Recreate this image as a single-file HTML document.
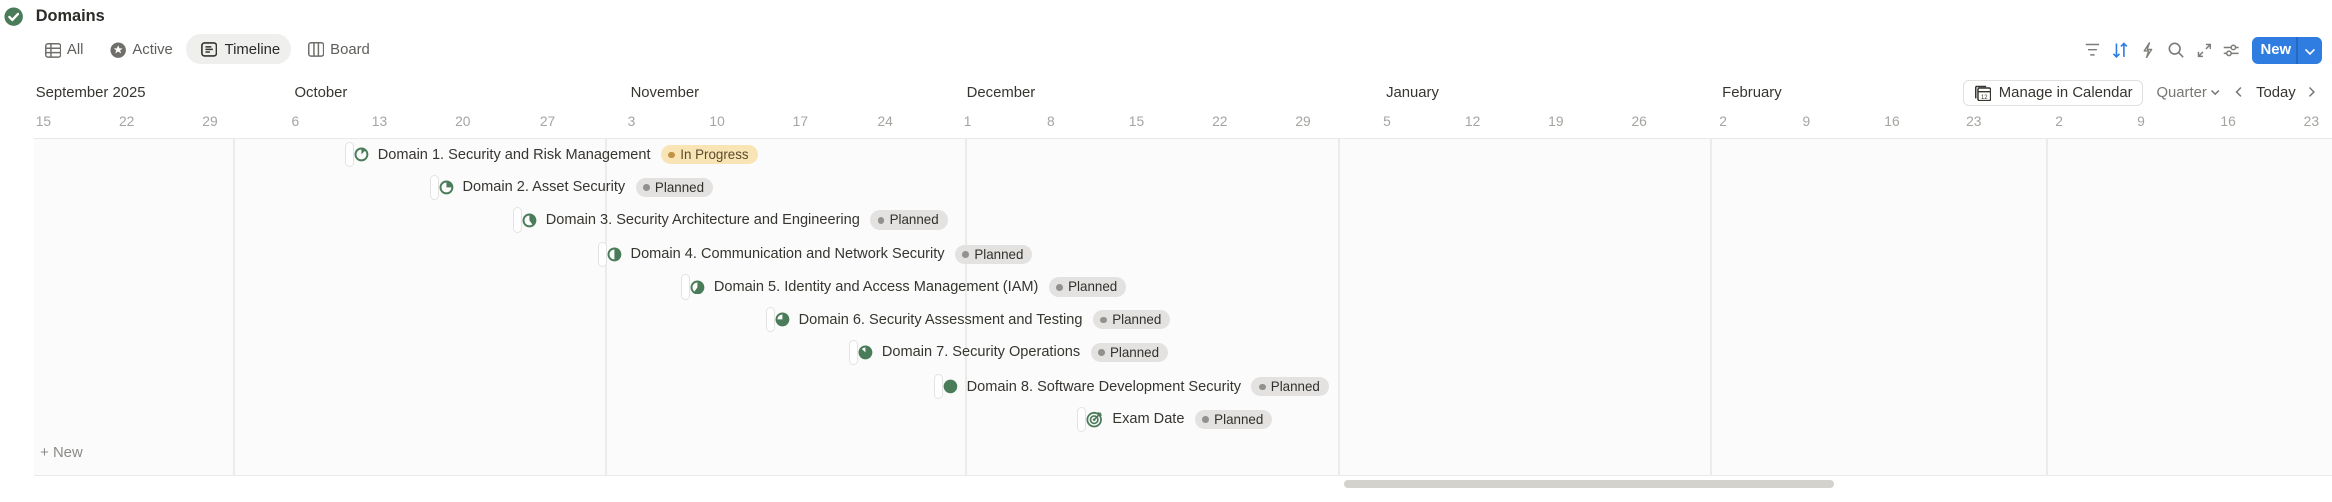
<!DOCTYPE html>
<html><head><meta charset="utf-8"><style>
html,body{margin:0;padding:0;background:#fff;overflow:hidden}
body{width:2332px;height:502px}
#w{zoom:1.4872;width:1568px;height:338px;position:relative;font-family:"Liberation Sans",sans-serif;color:#37352f}
.a{position:absolute;white-space:nowrap}
.tab{font-size:10px;color:#5f5e5b;top:28px}
.mo{font-size:10px;top:57px;color:#37352f}
.d{font-size:9.3px;color:#a5a4a0;top:76px}
.vl{position:absolute;top:93px;height:227px;width:1px;background:#ebebea}
.row{position:absolute;height:18px;display:flex;align-items:center;white-space:nowrap}
.hd{width:6px;height:17px;border:1px solid #e3e3e1;border-radius:4px;background:#fff;box-sizing:border-box;flex:none}
.row svg{margin-left:0;flex:none}
.t{font-size:9.8px;color:#37352f;margin-left:6px}
.b{font-size:9px;border-radius:7px;height:13px;line-height:13px;padding:0 6px 0 13px;position:relative;margin-left:7px}
.b:before{content:"";position:absolute;left:5px;top:4.5px;width:4.5px;height:4.5px;border-radius:50%;background:#91918e}
.p{background:#e3e2e0;color:#32302c}
.ip{background:#f9e4b5;color:#5b4a2a}
.ip:before{background:#c29343}
.ic{position:absolute}
</style></head><body><div id="w">
<svg class="a" style="left:3px;top:5px" width="13" height="13" viewBox="0 0 13 13"><circle cx="6.5" cy="6.5" r="6.2" fill="#4a7c59"/><path d="M3.6 6.7l2 2 3.8-4" stroke="#fff" stroke-width="1.6" fill="none" stroke-linecap="round" stroke-linejoin="round"/></svg>
<div class="a" style="left:24px;top:5px;font-size:11px;font-weight:bold;color:#2c2b28">Domains</div>

<svg class="ic" style="left:30px;top:29px" width="11" height="10" viewBox="0 0 11 10"><rect x=".5" y=".5" width="10" height="9" rx="1.5" fill="none" stroke="#6f6e69"/><path d="M.5 3.5h10M.5 6.5h10M4 .5v9" stroke="#6f6e69" fill="none"/></svg>
<div class="a tab" style="left:45px">All</div>
<svg class="ic" style="left:74px;top:28px" width="11" height="11" viewBox="0 0 11 11"><circle cx="5.5" cy="5.5" r="5.2" fill="#6f6e69"/><path d="M5.5 2.3l.9 2h2.1l-1.7 1.3.7 2.1-2-1.3-2 1.3.7-2.1-1.7-1.3h2.1z" fill="#fff"/></svg>
<div class="a tab" style="left:89px">Active</div>
<div class="a" style="left:125px;top:23px;width:71px;height:20px;border-radius:10px;background:#efefee"></div>
<svg class="ic" style="left:135px;top:28px" width="11" height="10" viewBox="0 0 11 10"><rect x=".6" y=".6" width="9.8" height="8.8" rx="1.8" fill="none" stroke="#37352f" stroke-width="1.1"/><path d="M3 3.3h4M3 5h5M3 6.7h3" stroke="#37352f"/></svg>
<div class="a tab" style="left:151px;color:#2c2b28">Timeline</div>
<svg class="ic" style="left:207px;top:28px" width="11" height="10" viewBox="0 0 11 10"><rect x=".5" y=".5" width="10" height="9" rx="1.5" fill="none" stroke="#6f6e69"/><path d="M4 .5v9M7 .5v9" stroke="#6f6e69"/></svg>
<div class="a tab" style="left:222px">Board</div>

<svg class="ic" style="left:1402px;top:29px" width="10" height="9" viewBox="0 0 10 9"><path d="M.5 1h9M2 4.5h6M3.5 8h3" stroke="#7d7c78" stroke-width="1"/></svg>
<svg class="ic" style="left:1420px;top:28px" width="11" height="11" viewBox="0 0 11 11"><path d="M3 1v9M1 8l2 2 2-2M8 10V1M6 3l2-2 2 2" stroke="#2f7de1" stroke-width="1.1" fill="none"/></svg>
<svg class="ic" style="left:1440px;top:28px" width="8" height="11" viewBox="0 0 8 11"><path d="M5 .5L1.5 6h3L3 10.5 6.5 5h-3z" fill="none" stroke="#7d7c78" stroke-width=".9" stroke-linejoin="round"/></svg>
<svg class="ic" style="left:1458px;top:28px" width="11" height="11" viewBox="0 0 11 11"><circle cx="4.5" cy="4.5" r="3.6" fill="none" stroke="#7d7c78" stroke-width="1.1"/><path d="M7.2 7.2l3 3" stroke="#7d7c78" stroke-width="1.1"/></svg>
<svg class="ic" style="left:1477px;top:29px" width="10" height="10" viewBox="0 0 10 10"><path d="M6 1h3v3M9 1L6 4M4 9H1V6M1 9l3-3" stroke="#7d7c78" fill="none"/></svg>
<svg class="ic" style="left:1495px;top:29px" width="11" height="10" viewBox="0 0 11 10"><path d="M.5 3h10M.5 7h10" stroke="#7d7c78"/><circle cx="7" cy="3" r="1.5" fill="#fff" stroke="#7d7c78"/><circle cx="4" cy="7" r="1.5" fill="#fff" stroke="#7d7c78"/></svg>
<div class="a" style="left:1514px;top:25px;width:47px;height:18px;border-radius:4px;background:#2f7de1"></div>
<div class="a" style="left:1544px;top:25px;width:1px;height:18px;background:#2569c0"></div>
<div class="a" style="left:1520px;top:28px;font-size:10px;font-weight:bold;color:#fff">New</div>
<svg class="a" style="left:1549px;top:32px" width="8" height="5" viewBox="0 0 8 5"><path d="M1 1l3 3 3-3" stroke="#fff" fill="none" stroke-width="1.1"/></svg>

<div class="a mo" style="left:24px">September 2025</div>
<div class="a mo" style="left:198px">October</div>
<div class="a mo" style="left:424px">November</div>
<div class="a mo" style="left:650px">December</div>
<div class="a mo" style="left:932px">January</div>
<div class="a mo" style="left:1158px">February</div>
<div class="a" style="left:1320px;top:54px;width:121px;height:17px;border:1px solid #e0e0de;border-radius:4px;box-sizing:border-box;background:#fff"></div>
<svg class="a" style="left:1328px;top:57px" width="11" height="11" viewBox="0 0 11 11"><rect x="2" y="2" width="8.5" height="8.5" rx="1" fill="none" stroke="#37352f"/><path d="M.5 1h7M.5 1v8M2 4.5h8.5" stroke="#37352f"/><text x="4" y="9.5" font-size="4" fill="#37352f" font-family="Liberation Sans">12</text></svg>
<div class="a" style="left:1344px;top:57px;font-size:10px">Manage in Calendar</div>
<div class="a" style="left:1450px;top:57px;font-size:10px;color:#787774">Quarter</div>
<svg class="a" style="left:1486px;top:60px" width="7" height="5" viewBox="0 0 7 5"><path d="M1 1l2.5 2.5L6 1" stroke="#787774" fill="none"/></svg>
<svg class="a" style="left:1503px;top:58px" width="5" height="8" viewBox="0 0 5 8"><path d="M4 1L1 4l3 3" stroke="#787774" fill="none"/></svg>
<div class="a" style="left:1517px;top:57px;font-size:10px">Today</div>
<svg class="a" style="left:1552px;top:58px" width="5" height="8" viewBox="0 0 5 8"><path d="M1 1l3 3-3 3" stroke="#787774" fill="none"/></svg>

<div class="a d" style="left:24px">15</div><div class="a d" style="left:80px">22</div><div class="a d" style="left:136px">29</div>
<div class="a d" style="left:196px">6</div><div class="a d" style="left:250px">13</div><div class="a d" style="left:306px">20</div><div class="a d" style="left:363px">27</div>
<div class="a d" style="left:422px">3</div><div class="a d" style="left:477px">10</div><div class="a d" style="left:533px">17</div><div class="a d" style="left:590px">24</div>
<div class="a d" style="left:648px">1</div><div class="a d" style="left:704px">8</div><div class="a d" style="left:759px">15</div><div class="a d" style="left:815px">22</div><div class="a d" style="left:871px">29</div>
<div class="a d" style="left:930px">5</div><div class="a d" style="left:985px">12</div><div class="a d" style="left:1041px">19</div><div class="a d" style="left:1097px">26</div>
<div class="a d" style="left:1156px">2</div><div class="a d" style="left:1212px">9</div><div class="a d" style="left:1267px">16</div><div class="a d" style="left:1322px">23</div>
<div class="a d" style="left:1382px">2</div><div class="a d" style="left:1437px">9</div><div class="a d" style="left:1493px">16</div><div class="a d" style="left:1549px">23</div>

<div class="a" style="left:23px;top:93px;width:1545px;height:227px;background:#fbfbfb;border-top:1px solid #e9e9e7;border-bottom:1px solid #e9e9e7;box-sizing:border-box"></div>
<div class="vl" style="left:157px"></div><div class="vl" style="left:407px"></div><div class="vl" style="left:649px"></div><div class="vl" style="left:900px"></div><div class="vl" style="left:1150px"></div><div class="vl" style="left:1376px"></div>

<div class="row" style="left:232px;top:95px"><div class="hd"></div><svg width="10" height="10"><circle cx="5" cy="5" r="4" fill="none" stroke="#4a7c59" stroke-width="1.3"/><path d="M5 5V1A4 4 0 0 1 7.74 2.08z" fill="#4a7c59"/></svg><span class="t">Domain 1. Security and Risk Management</span><span class="b ip">In Progress</span></div>

<div class="row" style="left:289px;top:117px"><div class="hd"></div><svg width="10" height="10"><circle cx="5" cy="5" r="4" fill="none" stroke="#4a7c59" stroke-width="1.3"/><path d="M5 5V1A4 4 0 0 1 9 5z" fill="#4a7c59"/></svg><span class="t">Domain 2. Asset Security</span><span class="b p">Planned</span></div>

<div class="row" style="left:345px;top:139px"><div class="hd"></div><svg width="10" height="10"><circle cx="5" cy="5" r="4" fill="none" stroke="#4a7c59" stroke-width="1.3"/><path d="M5 5V1A4 4 0 0 1 7.35 8.24z" fill="#4a7c59"/></svg><span class="t">Domain 3. Security Architecture and Engineering</span><span class="b p">Planned</span></div>

<div class="row" style="left:402px;top:162px"><div class="hd"></div><svg width="10" height="10"><circle cx="5" cy="5" r="4" fill="none" stroke="#4a7c59" stroke-width="1.3"/><path d="M5 5V1A4 4 0 0 1 5 9z" fill="#4a7c59"/></svg><span class="t">Domain 4. Communication and Network Security</span><span class="b p">Planned</span></div>

<div class="row" style="left:458px;top:184px"><div class="hd"></div><svg width="10" height="10"><circle cx="5" cy="5" r="4" fill="none" stroke="#4a7c59" stroke-width="1.3"/><path d="M5 5V1A4 4 0 1 1 2.65 8.24z" fill="#4a7c59"/></svg><span class="t">Domain 5. Identity and Access Management (IAM)</span><span class="b p">Planned</span></div>

<div class="row" style="left:515px;top:206px"><div class="hd"></div><svg width="10" height="10"><circle cx="5" cy="5" r="4" fill="none" stroke="#4a7c59" stroke-width="1.3"/><path d="M5 5V1A4 4 0 1 1 1 5z" fill="#4a7c59"/></svg><span class="t">Domain 6. Security Assessment and Testing</span><span class="b p">Planned</span></div>

<div class="row" style="left:571px;top:228px"><div class="hd"></div><svg width="10" height="10"><circle cx="5" cy="5" r="4" fill="none" stroke="#4a7c59" stroke-width="1.3"/><path d="M5 5V1A4 4 0 1 1 2.08 2.26z" fill="#4a7c59"/></svg><span class="t">Domain 7. Security Operations</span><span class="b p">Planned</span></div>

<div class="row" style="left:628px;top:251px"><div class="hd"></div><svg width="10" height="10"><circle cx="5" cy="5" r="4.6" fill="#4a7c59"/></svg><span class="t">Domain 8. Software Development Security</span><span class="b p">Planned</span></div>

<div class="row" style="left:724px;top:273px"><div class="hd"></div><svg width="12" height="12" viewBox="0 0 12 12"><circle cx="5.5" cy="6.5" r="4.6" fill="none" stroke="#4a7c59" stroke-width="1.2"/><circle cx="5.5" cy="6.5" r="2.5" fill="none" stroke="#4a7c59" stroke-width="1.1"/><circle cx="5.5" cy="6.5" r=".9" fill="#4a7c59"/><path d="M5.5 6.5L10 2M8.5 1.5v2h2" stroke="#4a7c59" stroke-width="1.1" fill="none"/></svg><span class="t">Exam Date</span><span class="b p">Planned</span></div>

<div class="a" style="left:27px;top:299px;font-size:10px;color:#8b8a86">+ New</div>
<div class="a" style="left:904px;top:323px;width:329px;height:5px;border-radius:3px;background:#d3d2cd"></div>
</div></body></html>
